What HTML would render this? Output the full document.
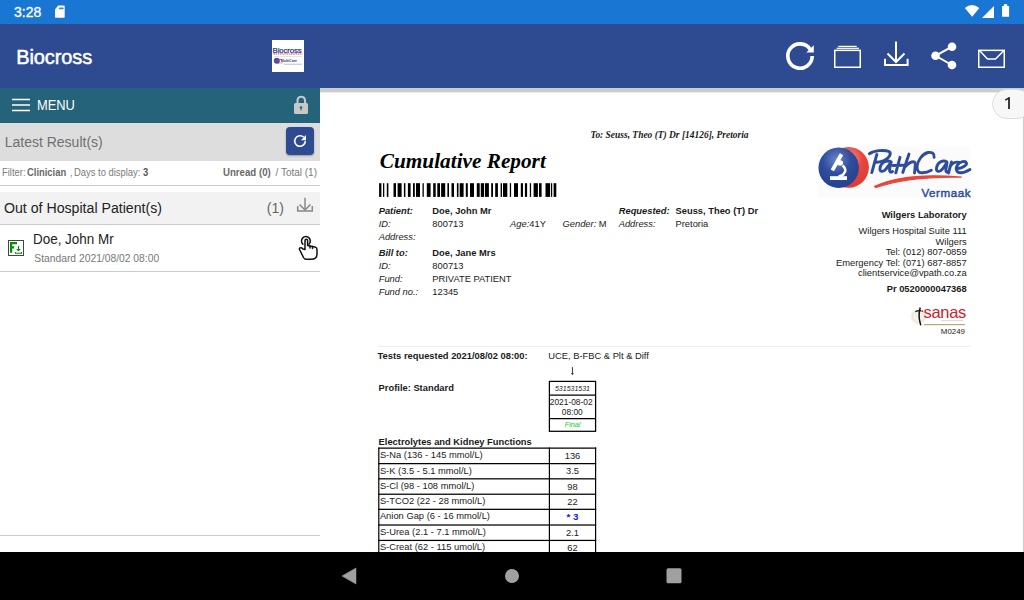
<!DOCTYPE html>
<html><head><meta charset="utf-8"><style>
html,body{margin:0;padding:0;width:1024px;height:600px;overflow:hidden;background:#fff;position:relative;}
</style></head><body>
<div style="position:absolute;left:0px;top:0px;width:1024px;height:24px;background:#1976D2;"></div>
<div style="position:absolute;left:14px;top:5.01px;font-family:'Liberation Sans', sans-serif;font-size:14px;line-height:14px;color:#fff;font-weight:normal;font-style:normal;white-space:pre;-webkit-text-stroke:0.3px #fff;">3:28</div>
<svg style="position:absolute;left:0;top:0" width="1024" height="24"><path d="M58.3 5.4 H64 Q64.7 5.4 64.7 6.1 V17 Q64.7 17.7 64 17.7 H55.7 Q55 17.7 55 17 V9.3 Z" fill="#fff"/><rect x="58.8" y="7.4" width="4.9" height="1.8" rx="0.8" fill="#3a8ae0"/><path d="M964.8 8 Q972 2 979.3 8 L972.2 16.8 Z" fill="#fff"/><path d="M982 17.9 L994 5.9 L994 17.9 Z" fill="#fff"/><rect x="1002" y="6" width="7.1" height="10.8" rx="0.6" fill="#fff"/><rect x="1003.9" y="4.2" width="3.3" height="2" fill="#fff"/></svg>
<div style="position:absolute;left:0px;top:24px;width:1024px;height:64px;background:#2E4A91;"></div>
<div style="position:absolute;left:16.2px;top:47.20px;font-family:'Liberation Sans', sans-serif;font-size:20px;line-height:20px;color:#fff;font-weight:normal;font-style:normal;white-space:pre;-webkit-text-stroke:0.5px #fff;letter-spacing:-0.1px;">Biocross</div>
<div style="position:absolute;left:272px;top:40px;width:32px;height:32px;background:#fff;"></div>
<div style="position:absolute;left:272.6px;top:46.71px;font-family:'Liberation Sans', sans-serif;font-size:7.9px;line-height:7.9px;color:#2A3C8C;font-weight:normal;font-style:normal;white-space:pre;letter-spacing:-0.15px;-webkit-text-stroke:0.25px #2A3C8C;">Biocross</div>
<svg style="position:absolute;left:272px;top:40px" width="32" height="32"><path d="M1.5 14 H30.5" stroke="#E03030" stroke-width="0.9" stroke-dasharray="1.4 0.8"/><rect x="1.5" y="16.3" width="29" height="0.4" fill="#b8bcd0"/><circle cx="4.8" cy="20.8" r="3" fill="#3555A8"/><path d="M2 22.5 Q5 19 9.5 19.5" stroke="#E33" stroke-width="0.9" fill="none"/><text x="8.7" y="22" font-family="Liberation Sans" font-size="3.6" font-weight="bold" fill="#2A3C8C">MultiCare</text><path d="M6 23.5 Q8 22.5 11 23" stroke="#E33" stroke-width="0.5" fill="none"/><rect x="12" y="23.9" width="18" height="0.35" fill="#3a4a98"/></svg>
<svg style="position:absolute;left:0;top:0" width="1024" height="88"><path d="M812.2 56 A12.2 12.2 0 1 1 810.3 49.5" stroke="#fff" stroke-width="3.6" fill="none"/><path d="M806.3 52.4 L813.8 52.4 L813.8 45.2 Z" fill="#fff"/><rect x="834.75" y="50.35" width="25.5" height="16.9" stroke="#fff" stroke-width="1.5" fill="none"/><path d="M836.6 48.3 H859" stroke="#fff" stroke-width="1.2"/><path d="M838.3 46.4 H856.7" stroke="#fff" stroke-width="1.2"/><path d="M896 41.6 V62.5" stroke="#fff" stroke-width="2"/><path d="M887.5 53.5 L896 62 L904.5 53.5" stroke="#fff" stroke-width="2" fill="none"/><path d="M885 58.7 V65 H907.6 V58.7" stroke="#fff" stroke-width="2" fill="none"/><path d="M952 46.7 L935.5 55.8 L952 65" stroke="#fff" stroke-width="2" fill="none"/><circle cx="952" cy="46.7" r="4.3" fill="#fff"/><circle cx="935.5" cy="55.8" r="4.3" fill="#fff"/><circle cx="952" cy="65" r="4.3" fill="#fff"/><rect x="978.75" y="50.35" width="25.5" height="16.9" stroke="#fff" stroke-width="1.5" fill="none"/><path d="M979.5 50.5 L987.5 59 H995.5 L1004 50.5" stroke="#fff" stroke-width="1.5" fill="none"/></svg>
<div style="position:absolute;left:0px;top:88px;width:320px;height:464px;background:#fff;"></div>
<div style="position:absolute;left:0px;top:88px;width:320px;height:35px;background:#246379;"></div>
<svg style="position:absolute;left:0;top:88px" width="320" height="35"><path d="M12 11.4 H30 M12 17 H30 M12 22.6 H30" stroke="#fff" stroke-width="1.5"/><path d="M297.5 15 V12 A3.8 3.8 0 0 1 305 12 V15" stroke="#c8c8c8" stroke-width="2" fill="none"/><rect x="294" y="15" width="14" height="11" rx="1.5" fill="#c8c8c8"/><circle cx="301" cy="19.5" r="1.3" fill="#246379"/><rect x="300.5" y="19.5" width="1" height="3" fill="#246379"/></svg>
<div style="position:absolute;left:36.7px;top:98.01px;font-family:'Liberation Sans', sans-serif;font-size:14px;line-height:14px;color:#fff;font-weight:normal;font-style:normal;white-space:pre;transform-origin:0 0;transform:scaleX(0.92);">MENU</div>
<div style="position:absolute;left:0px;top:123px;width:320px;height:38px;background:#DDDDDD;"></div>
<div style="position:absolute;left:4.7px;top:135.01px;font-family:'Liberation Sans', sans-serif;font-size:14px;line-height:14px;color:#707070;font-weight:normal;font-style:normal;white-space:pre;">Latest Result(s)</div>
<div style="position:absolute;left:286px;top:127px;width:28px;height:28px;background:#2E4A91;border-radius:4px;box-shadow:0 1px 2px rgba(0,0,0,0.3);"></div>
<svg style="position:absolute;left:0;top:0" width="320" height="160"><path d="M305.3 141 A5.3 5.3 0 1 1 303.8 137.3" stroke="#fff" stroke-width="1.6" fill="none"/><path d="M301 140.2 L306 140.2 L306 135 Z" fill="#fff"/></svg>
<div style="position:absolute;left:1.8px;top:167.72px;font-family:'Liberation Sans', sans-serif;font-size:10px;line-height:10px;color:#7a7a7a;font-weight:normal;font-style:normal;white-space:pre;transform-origin:0 0;transform:scaleX(0.94);">Filter:</div>
<div style="position:absolute;left:27.1px;top:167.72px;font-family:'Liberation Sans', sans-serif;font-size:10px;line-height:10px;color:#6a6a6a;font-weight:bold;font-style:normal;white-space:pre;transform-origin:0 0;transform:scaleX(0.94);">Clinician</div>
<div style="position:absolute;left:69.5px;top:167.72px;font-family:'Liberation Sans', sans-serif;font-size:10px;line-height:10px;color:#7a7a7a;font-weight:normal;font-style:normal;white-space:pre;transform-origin:0 0;transform:scaleX(0.94);">,</div>
<div style="position:absolute;left:74.4px;top:167.72px;font-family:'Liberation Sans', sans-serif;font-size:10px;line-height:10px;color:#7a7a7a;font-weight:normal;font-style:normal;white-space:pre;transform-origin:0 0;transform:scaleX(0.94);">Days to display:</div>
<div style="position:absolute;left:142.7px;top:167.72px;font-family:'Liberation Sans', sans-serif;font-size:10px;line-height:10px;color:#555555;font-weight:bold;font-style:normal;white-space:pre;transform-origin:0 0;transform:scaleX(0.94);">3</div>
<div style="position:absolute;left:222.5px;top:167.72px;font-family:'Liberation Sans', sans-serif;font-size:10px;line-height:10px;color:#6a6a6a;font-weight:bold;font-style:normal;white-space:pre;transform-origin:0 0;transform:scaleX(0.965);">Unread (0)</div>
<div style="position:absolute;left:275.5px;top:167.72px;font-family:'Liberation Sans', sans-serif;font-size:10px;line-height:10px;color:#7a7a7a;font-weight:normal;font-style:normal;white-space:pre;transform-origin:0 0;transform:scaleX(1.0);">/ Total (1)</div>
<div style="position:absolute;left:0px;top:185px;width:320px;height:1px;background:#CCCCCC;"></div>
<div style="position:absolute;left:0px;top:192px;width:320px;height:32px;background:#F2F2F2;"></div>
<div style="position:absolute;left:4.4px;top:200.70px;font-family:'Liberation Sans', sans-serif;font-size:14px;line-height:14px;color:#222222;font-weight:normal;font-style:normal;white-space:pre;transform-origin:0 0;transform:scaleX(1.01);">Out of Hospital Patient(s)</div>
<div style="position:absolute;left:266.8px;top:201.01px;font-family:'Liberation Sans', sans-serif;font-size:14px;line-height:14px;color:#666666;font-weight:normal;font-style:normal;white-space:pre;">(1)</div>
<svg style="position:absolute;left:0;top:0" width="320" height="280"><path d="M305 197.7 V210" stroke="#888" stroke-width="1.5"/><path d="M299.5 204.5 L305 210 L310.5 204.5" stroke="#888" stroke-width="1.5" fill="none"/><path d="M297.7 206 V211 H312.3 V206" stroke="#888" stroke-width="1.5" fill="none"/></svg>
<div style="position:absolute;left:0px;top:224px;width:320px;height:1px;background:#CCCCCC;"></div>
<div style="position:absolute;left:32.9px;top:232.01px;font-family:'Liberation Sans', sans-serif;font-size:14px;line-height:14px;color:#222222;font-weight:normal;font-style:normal;white-space:pre;transform-origin:0 0;transform:scaleX(0.96);">Doe, John Mr</div>
<div style="position:absolute;left:34.3px;top:253.71px;font-family:'Liberation Sans', sans-serif;font-size:10.3px;line-height:10.3px;color:#777777;font-weight:normal;font-style:normal;white-space:pre;">Standard 2021/08/02 08:00</div>
<svg style="position:absolute;left:0;top:0" width="320" height="280"><rect x="8.5" y="240.5" width="15" height="15" stroke="#444" stroke-width="1" fill="#fff"/><path d="M11.1 252.8 V243.1 H17 M11.1 247.3 H14.2" stroke="#0A8A0A" stroke-width="2.2" fill="none"/><path d="M18.5 246 V250" stroke="#0A8A0A" stroke-width="1.2"/><path d="M16.2 249 H20.8 L18.5 251.5 Z" fill="#0A8A0A"/><path d="M15.5 252 V253.3 H21.5 V252" stroke="#0A8A0A" stroke-width="1.1" fill="none"/><g stroke="#111" stroke-width="1.5" fill="#fff" stroke-linejoin="round" stroke-linecap="round"><path d="M302.8 244.1 A4.4 4.4 0 1 1 309 244.1" fill="none"/><path d="M305 249.5 V240.5 A1.3 1.3 0 0 1 307.6 240.5 V245.5 L315 247 Q317 247.5 317 249.5 V254 Q317 259.3 311 259.3 H306 Q304.5 259.3 303.5 257.5 L299.5 249.5 Q299 248 300.5 247.8 Q302 247.5 303 249 Z"/><path d="M310 246 V248 M312.5 246.5 V248.5"/></g></svg>
<div style="position:absolute;left:0px;top:271px;width:320px;height:1px;background:#CCCCCC;"></div>
<div style="position:absolute;left:0px;top:535px;width:320px;height:1px;background:#CCCCCC;"></div>
<div style="position:absolute;left:320px;top:88px;width:704px;height:464px;background:#FFFFFF;"></div>
<svg style="position:absolute;left:320px;top:88px" width="704" height="6"><rect x="0" y="0" width="704" height="4.4" fill="#CCCCCC"/></svg>
<div style="position:absolute;left:1023px;top:92px;width:1px;height:460px;background:#CCCCCC;"></div>
<div style="position:absolute;left:590.5px;top:131.20px;font-family:'Liberation Serif', serif;font-size:9.45px;line-height:9.45px;color:#1a1a1a;font-weight:bold;font-style:italic;white-space:pre;">To: Seuss, Theo (T) Dr [14126], Pretoria</div>
<div style="position:absolute;left:379.8px;top:151.00px;font-family:'Liberation Serif', serif;font-size:21.27px;line-height:21.27px;color:#000;font-weight:bold;font-style:italic;white-space:pre;">Cumulative Report</div>
<svg style="position:absolute;left:0;top:0" width="1024" height="600"><rect x="379.1" y="183.2" width="2.3" height="13.7" fill="#000"/><rect x="383" y="183.2" width="1.3" height="13.7" fill="#000"/><rect x="386.8" y="183.2" width="1.6" height="13.7" fill="#000"/><rect x="393.5" y="183.2" width="2.5" height="13.7" fill="#000"/><rect x="397.6" y="183.2" width="4" height="13.7" fill="#000"/><rect x="403.9" y="183.2" width="1.5" height="13.7" fill="#000"/><rect x="407.9" y="183.2" width="2.7" height="13.7" fill="#000"/><rect x="413" y="183.2" width="1.8" height="13.7" fill="#000"/><rect x="416" y="183.2" width="4" height="13.7" fill="#000"/><rect x="422.5" y="183.2" width="1.3" height="13.7" fill="#000"/><rect x="426.8" y="183.2" width="3.8" height="13.7" fill="#000"/><rect x="433.2" y="183.2" width="2.5" height="13.7" fill="#000"/><rect x="437.3" y="183.2" width="2.7" height="13.7" fill="#000"/><rect x="441.1" y="183.2" width="4.1" height="13.7" fill="#000"/><rect x="447.4" y="183.2" width="1.6" height="13.7" fill="#000"/><rect x="451.5" y="183.2" width="2.5" height="13.7" fill="#000"/><rect x="456.9" y="183.2" width="1.6" height="13.7" fill="#000"/><rect x="459.7" y="183.2" width="3.9" height="13.7" fill="#000"/><rect x="465.8" y="183.2" width="2" height="13.7" fill="#000"/><rect x="470" y="183.2" width="4" height="13.7" fill="#000"/><rect x="476.8" y="183.2" width="2.9" height="13.7" fill="#000"/><rect x="480.8" y="183.2" width="3.2" height="13.7" fill="#000"/><rect x="484.9" y="183.2" width="4" height="13.7" fill="#000"/><rect x="491.2" y="183.2" width="1.8" height="13.7" fill="#000"/><rect x="495.2" y="183.2" width="2.7" height="13.7" fill="#000"/><rect x="500.6" y="183.2" width="1.4" height="13.7" fill="#000"/><rect x="503" y="183.2" width="4.3" height="13.7" fill="#000"/><rect x="509.8" y="183.2" width="1.3" height="13.7" fill="#000"/><rect x="514" y="183.2" width="4" height="13.7" fill="#000"/><rect x="520.8" y="183.2" width="2.2" height="13.7" fill="#000"/><rect x="524.9" y="183.2" width="2.2" height="13.7" fill="#000"/><rect x="529.8" y="183.2" width="1.3" height="13.7" fill="#000"/><rect x="533.6" y="183.2" width="4.3" height="13.7" fill="#000"/><rect x="539" y="183.2" width="2.6" height="13.7" fill="#000"/><rect x="545.5" y="183.2" width="4.5" height="13.7" fill="#000"/><rect x="550.9" y="183.2" width="1.3" height="13.7" fill="#000"/><rect x="553.6" y="183.2" width="2.7" height="13.7" fill="#000"/></svg>
<div style="position:absolute;left:378.7px;top:206.70px;font-family:'Liberation Sans', sans-serif;font-size:9.35px;line-height:9.35px;color:#1a1a1a;font-weight:bold;font-style:italic;white-space:pre;">Patient:</div>
<div style="position:absolute;left:432.3px;top:206.70px;font-family:'Liberation Sans', sans-serif;font-size:9.35px;line-height:9.35px;color:#1a1a1a;font-weight:bold;font-style:normal;white-space:pre;">Doe, John Mr</div>
<div style="position:absolute;left:378.7px;top:219.70px;font-family:'Liberation Sans', sans-serif;font-size:9.35px;line-height:9.35px;color:#1a1a1a;font-weight:normal;font-style:italic;white-space:pre;">ID:</div>
<div style="position:absolute;left:432.3px;top:219.70px;font-family:'Liberation Sans', sans-serif;font-size:9.35px;line-height:9.35px;color:#1a1a1a;font-weight:normal;font-style:normal;white-space:pre;">800713</div>
<div style="position:absolute;left:378.7px;top:232.70px;font-family:'Liberation Sans', sans-serif;font-size:9.35px;line-height:9.35px;color:#1a1a1a;font-weight:normal;font-style:italic;white-space:pre;">Address:</div>
<div style="position:absolute;left:378.7px;top:248.81px;font-family:'Liberation Sans', sans-serif;font-size:9.35px;line-height:9.35px;color:#1a1a1a;font-weight:bold;font-style:italic;white-space:pre;">Bill to:</div>
<div style="position:absolute;left:432.3px;top:248.81px;font-family:'Liberation Sans', sans-serif;font-size:9.35px;line-height:9.35px;color:#1a1a1a;font-weight:bold;font-style:normal;white-space:pre;">Doe, Jane Mrs</div>
<div style="position:absolute;left:378.7px;top:261.81px;font-family:'Liberation Sans', sans-serif;font-size:9.35px;line-height:9.35px;color:#1a1a1a;font-weight:normal;font-style:italic;white-space:pre;">ID:</div>
<div style="position:absolute;left:432.3px;top:261.81px;font-family:'Liberation Sans', sans-serif;font-size:9.35px;line-height:9.35px;color:#1a1a1a;font-weight:normal;font-style:normal;white-space:pre;">800713</div>
<div style="position:absolute;left:378.7px;top:274.70px;font-family:'Liberation Sans', sans-serif;font-size:9.35px;line-height:9.35px;color:#1a1a1a;font-weight:normal;font-style:italic;white-space:pre;">Fund:</div>
<div style="position:absolute;left:432.3px;top:274.70px;font-family:'Liberation Sans', sans-serif;font-size:9.35px;line-height:9.35px;color:#1a1a1a;font-weight:normal;font-style:normal;white-space:pre;">PRIVATE PATIENT</div>
<div style="position:absolute;left:378.7px;top:287.70px;font-family:'Liberation Sans', sans-serif;font-size:9.35px;line-height:9.35px;color:#1a1a1a;font-weight:normal;font-style:italic;white-space:pre;">Fund no.:</div>
<div style="position:absolute;left:432.3px;top:287.70px;font-family:'Liberation Sans', sans-serif;font-size:9.35px;line-height:9.35px;color:#1a1a1a;font-weight:normal;font-style:normal;white-space:pre;">12345</div>
<div style="position:absolute;left:510px;top:219.70px;font-family:'Liberation Sans', sans-serif;font-size:9.35px;line-height:9.35px;color:#1a1a1a;font-weight:normal;font-style:normal;white-space:pre;"><i>Age:</i>41Y</div>
<div style="position:absolute;left:562.5px;top:219.70px;font-family:'Liberation Sans', sans-serif;font-size:9.35px;line-height:9.35px;color:#1a1a1a;font-weight:normal;font-style:normal;white-space:pre;"><i>Gender:</i> M</div>
<div style="position:absolute;left:618.7px;top:206.70px;font-family:'Liberation Sans', sans-serif;font-size:9.35px;line-height:9.35px;color:#1a1a1a;font-weight:bold;font-style:italic;white-space:pre;">Requested:</div>
<div style="position:absolute;left:675.5px;top:206.70px;font-family:'Liberation Sans', sans-serif;font-size:9.35px;line-height:9.35px;color:#1a1a1a;font-weight:bold;font-style:normal;white-space:pre;">Seuss, Theo (T) Dr</div>
<div style="position:absolute;left:618.7px;top:219.70px;font-family:'Liberation Sans', sans-serif;font-size:9.35px;line-height:9.35px;color:#1a1a1a;font-weight:normal;font-style:italic;white-space:pre;">Address:</div>
<div style="position:absolute;left:675.5px;top:219.70px;font-family:'Liberation Sans', sans-serif;font-size:9.35px;line-height:9.35px;color:#1a1a1a;font-weight:normal;font-style:normal;white-space:pre;">Pretoria</div>
<div style="position:absolute;left:818px;top:147px;width:152px;height:50px;background:#FBFBFB;"></div>
<svg style="position:absolute;left:0;top:0" width="1024" height="600"><defs><radialGradient id="gb" cx="0.45" cy="0.3" r="0.7"><stop offset="0" stop-color="#6f86c4"/><stop offset="0.5" stop-color="#2f4c9e"/><stop offset="1" stop-color="#25418f"/></radialGradient><radialGradient id="gr" cx="0.5" cy="0.3" r="0.7"><stop offset="0" stop-color="#f59a90"/><stop offset="0.5" stop-color="#e8453c"/><stop offset="1" stop-color="#e03a32"/></radialGradient></defs><circle cx="848.5" cy="167.3" r="20.4" fill="url(#gr)"/><circle cx="838.7" cy="167.7" r="20.2" fill="url(#gb)"/><path d="M841.5 154.3 L832.3 170.4" stroke="#fff" stroke-width="3.8"/><circle cx="840.2" cy="163" r="2.8" fill="#fff"/><path d="M842.6 165.6 Q847.6 170 843.5 174.2 Q841.5 176 838.5 176.5" stroke="#fff" stroke-width="2.6" fill="none"/><rect x="830" y="176.2" width="17" height="3.8" fill="#fff"/><path d="M874.7 186.4 Q905 172 961.7 177.2 Q910 176 876 187.5 Z" fill="#E8453C" stroke="#E8453C" stroke-width="1.2"/></svg>
<svg style="position:absolute;left:0;top:0" width="1024" height="600"><g stroke="#2E4C9C" stroke-width="2.9" fill="none" stroke-linecap="round" stroke-linejoin="round"><path d="M869.4 153.7 C874 150.5 884 149.5 889 151.5 C892 153.5 889 158.5 884 160.5 C881 161.8 878 162.3 876 162.3"/><path d="M876.8 154.5 L871.8 172.6"/><path d="M891.3 162 C887 159.5 881 162 880 168 C879.5 172 883 172.5 886 169 L891 162.5 L889.5 170 C889.5 172.5 891 172.5 892.5 171.5"/><path d="M900 157.3 L895.8 172.8 M892.8 165.5 L903.3 165.2"/><path d="M909 154 L902.8 172.5 M905 167 C908 163 912.5 161 914.5 162 C916 163 915 167 914.5 173"/><path d="M934.1 157.3 C934.5 153.5 932 151.8 928 152.5 C922 154 917.5 161 917.1 166.5 C916.8 171 919 173 922.5 172.8 C926 172.6 929 171.5 931.3 170.2"/><path d="M947 162 C943 159.5 937.5 162 936.5 168 C936 172 939.5 172.5 942.5 169 L947 162.5 L945.8 170 C945.8 172.5 947 172.5 948.5 171.5"/><path d="M951.5 162 L948.5 173 M949.8 167 C952 163 956 161.5 959 162.3"/><path d="M958 168.5 C962 168 967 165.5 966.5 163 C965.5 160.5 960 161 957.5 165 C955 169 956.5 173 961 172.8 C964 172.7 967.5 171 970 169.5"/></g></svg>
<div style="position:absolute;right:53.0px;top:186.81px;font-family:'Liberation Sans', sans-serif;font-size:11.6px;line-height:11.6px;color:#2E4C9C;font-weight:normal;font-style:normal;white-space:pre;-webkit-text-stroke:0.45px #2E4C9C;letter-spacing:0.55px;transform-origin:100% 0;transform:scaleY(0.98);">Vermaak</div>
<div style="position:absolute;right:57.299999999999955px;top:211.01px;font-family:'Liberation Sans', sans-serif;font-size:9.35px;line-height:9.35px;color:#1a1a1a;font-weight:bold;font-style:normal;white-space:pre;">Wilgers Laboratory</div>
<div style="position:absolute;right:57.299999999999955px;top:227.01px;font-family:'Liberation Sans', sans-serif;font-size:9.35px;line-height:9.35px;color:#1a1a1a;font-weight:normal;font-style:normal;white-space:pre;">Wilgers Hospital Suite 111</div>
<div style="position:absolute;right:57.299999999999955px;top:237.51px;font-family:'Liberation Sans', sans-serif;font-size:9.35px;line-height:9.35px;color:#1a1a1a;font-weight:normal;font-style:normal;white-space:pre;">Wilgers</div>
<div style="position:absolute;right:57.299999999999955px;top:248.01px;font-family:'Liberation Sans', sans-serif;font-size:9.35px;line-height:9.35px;color:#1a1a1a;font-weight:normal;font-style:normal;white-space:pre;">Tel: (012) 807-0859</div>
<div style="position:absolute;right:57.299999999999955px;top:258.70px;font-family:'Liberation Sans', sans-serif;font-size:9.35px;line-height:9.35px;color:#1a1a1a;font-weight:normal;font-style:normal;white-space:pre;">Emergency Tel: (071) 687-8857</div>
<div style="position:absolute;right:57.299999999999955px;top:268.51px;font-family:'Liberation Sans', sans-serif;font-size:9.35px;line-height:9.35px;color:#1a1a1a;font-weight:normal;font-style:normal;white-space:pre;">clientservice@vpath.co.za</div>
<div style="position:absolute;right:57.299999999999955px;top:284.81px;font-family:'Liberation Sans', sans-serif;font-size:9.35px;line-height:9.35px;color:#1a1a1a;font-weight:bold;font-style:normal;white-space:pre;">Pr 0520000047368</div>
<svg style="position:absolute;left:0;top:0" width="1024" height="600"><circle cx="918.5" cy="316.5" r="8" fill="#EDE8D8" opacity="0.55"/><circle cx="918.5" cy="316.5" r="6" fill="none" stroke="#D8D0B0" stroke-width="0.6" opacity="0.8"/><path d="M920.2 307.5 Q918.5 314 919.2 318 Q919.8 322 920.8 325.4" stroke="#111" stroke-width="1.5" fill="none"/><path d="M915.4 311.6 Q918 310.3 921 310.6" stroke="#111" stroke-width="1.2" fill="none"/><circle cx="922.3" cy="311.2" r="0.9" fill="#c22"/><rect x="924" y="324" width="41" height="1.2" fill="#b8a878"/><rect x="941" y="320.5" width="22" height="0.6" fill="#bbb"/></svg>
<div style="position:absolute;left:923.5px;top:303.52px;font-family:'Liberation Sans', sans-serif;font-size:16.5px;line-height:16.5px;color:#D0202A;font-weight:normal;font-style:normal;white-space:pre;letter-spacing:-0.3px;">sanas</div>
<div style="position:absolute;right:59px;top:327.77px;font-family:'Liberation Sans', sans-serif;font-size:7.9px;line-height:7.9px;color:#222;font-weight:normal;font-style:normal;white-space:pre;">M0249</div>
<div style="position:absolute;left:378px;top:346px;width:592px;height:1px;background:#EEEEEE;"></div>
<div style="position:absolute;left:377.6px;top:352.40px;font-family:'Liberation Sans', sans-serif;font-size:9.35px;line-height:9.35px;color:#1a1a1a;font-weight:bold;font-style:normal;white-space:pre;">Tests requested 2021/08/02 08:00:</div>
<div style="position:absolute;left:548.25px;top:352.01px;font-family:'Liberation Sans', sans-serif;font-size:9.35px;line-height:9.35px;color:#1a1a1a;font-weight:normal;font-style:normal;white-space:pre;">UCE, B-FBC &amp; Plt &amp; Diff</div>
<div style="position:absolute;left:378.6px;top:384.01px;font-family:'Liberation Sans', sans-serif;font-size:9.35px;line-height:9.35px;color:#1a1a1a;font-weight:bold;font-style:normal;white-space:pre;">Profile: Standard</div>
<div style="position:absolute;left:272.5px;width:600px;text-align:center;top:384.76px;font-family:'Liberation Sans', sans-serif;font-size:7px;line-height:7px;color:#1a1a1a;font-weight:normal;font-style:italic;white-space:pre;">531531531</div>
<div style="position:absolute;left:271.20000000000005px;width:600px;text-align:center;top:398.02px;font-family:'Liberation Sans', sans-serif;font-size:8.36px;line-height:8.36px;color:#1a1a1a;font-weight:normal;font-style:normal;white-space:pre;">2021-08-02</div>
<div style="position:absolute;left:272.29999999999995px;width:600px;text-align:center;top:407.77px;font-family:'Liberation Sans', sans-serif;font-size:8.36px;line-height:8.36px;color:#1a1a1a;font-weight:normal;font-style:normal;white-space:pre;">08:00</div>
<div style="position:absolute;left:272.6px;width:600px;text-align:center;top:421.22px;font-family:'Liberation Sans', sans-serif;font-size:7.25px;line-height:7.25px;color:#22C922;font-weight:normal;font-style:italic;white-space:pre;">Final</div>
<div style="position:absolute;left:378.6px;top:437.70px;font-family:'Liberation Sans', sans-serif;font-size:9.35px;line-height:9.35px;color:#1a1a1a;font-weight:bold;font-style:normal;white-space:pre;">Electrolytes and Kidney Functions</div>
<svg style="position:absolute;left:0;top:0" width="1024" height="600"><rect x="378.2" y="447.5" width="218" height="1.25" fill="#000"/><rect x="378.2" y="463.0" width="218" height="1.25" fill="#000"/><rect x="378.2" y="478.2" width="218" height="1.25" fill="#000"/><rect x="378.2" y="493.59999999999997" width="218" height="1.25" fill="#000"/><rect x="378.2" y="508.7" width="218" height="1.25" fill="#000"/><rect x="378.2" y="524.4" width="218" height="1.25" fill="#000"/><rect x="378.2" y="539.8" width="218" height="1.25" fill="#000"/><rect x="378.2" y="555.1" width="218" height="1.25" fill="#000"/><rect x="378.2" y="447.5" width="1.2" height="110" fill="#000"/><rect x="548.8" y="447.5" width="1.2" height="110" fill="#000"/><rect x="595.0" y="447.5" width="1.2" height="110" fill="#000"/><rect x="549.4" y="381.4" width="46.2" height="49.9" fill="none" stroke="#000" stroke-width="1.25"/><rect x="549" y="394.5" width="47" height="1.25" fill="#000"/><rect x="549" y="418" width="47" height="1.25" fill="#000"/><path d="M572.45 367.1 V373.5" stroke="#333" stroke-width="1"/><path d="M570.8 373.2 H574.1 L572.45 374.9 Z" fill="#222"/></svg>
<div style="position:absolute;left:379.9px;top:451.10px;font-family:'Liberation Sans', sans-serif;font-size:9.35px;line-height:9.35px;color:#1a1a1a;font-weight:normal;font-style:normal;white-space:pre;">S-Na (136 - 145 mmol/L)</div>
<div style="position:absolute;left:272.5px;width:600px;text-align:center;top:451.81px;font-family:'Liberation Sans', sans-serif;font-size:9.35px;line-height:9.35px;color:#1a1a1a;font-weight:normal;font-style:normal;white-space:pre;">136</div>
<div style="position:absolute;left:379.9px;top:466.60px;font-family:'Liberation Sans', sans-serif;font-size:9.35px;line-height:9.35px;color:#1a1a1a;font-weight:normal;font-style:normal;white-space:pre;">S-K (3.5 - 5.1 mmol/L)</div>
<div style="position:absolute;left:272.5px;width:600px;text-align:center;top:467.31px;font-family:'Liberation Sans', sans-serif;font-size:9.35px;line-height:9.35px;color:#1a1a1a;font-weight:normal;font-style:normal;white-space:pre;">3.5</div>
<div style="position:absolute;left:379.9px;top:481.81px;font-family:'Liberation Sans', sans-serif;font-size:9.35px;line-height:9.35px;color:#1a1a1a;font-weight:normal;font-style:normal;white-space:pre;">S-Cl (98 - 108 mmol/L)</div>
<div style="position:absolute;left:272.5px;width:600px;text-align:center;top:482.51px;font-family:'Liberation Sans', sans-serif;font-size:9.35px;line-height:9.35px;color:#1a1a1a;font-weight:normal;font-style:normal;white-space:pre;">98</div>
<div style="position:absolute;left:379.9px;top:497.20px;font-family:'Liberation Sans', sans-serif;font-size:9.35px;line-height:9.35px;color:#1a1a1a;font-weight:normal;font-style:normal;white-space:pre;">S-TCO2 (22 - 28 mmol/L)</div>
<div style="position:absolute;left:272.5px;width:600px;text-align:center;top:497.90px;font-family:'Liberation Sans', sans-serif;font-size:9.35px;line-height:9.35px;color:#1a1a1a;font-weight:normal;font-style:normal;white-space:pre;">22</div>
<div style="position:absolute;left:379.9px;top:512.31px;font-family:'Liberation Sans', sans-serif;font-size:9.35px;line-height:9.35px;color:#1a1a1a;font-weight:normal;font-style:normal;white-space:pre;">Anion Gap (6 - 16 mmol/L)</div>
<div style="position:absolute;left:272.5px;width:600px;text-align:center;top:512.01px;font-family:'Liberation Sans', sans-serif;font-size:9.35px;line-height:9.35px;color:#1a1a1a;font-weight:normal;font-style:normal;white-space:pre;"><b style="color:#1515F0;font-size:9.8px">* 3</b></div>
<div style="position:absolute;left:379.9px;top:528.01px;font-family:'Liberation Sans', sans-serif;font-size:9.35px;line-height:9.35px;color:#1a1a1a;font-weight:normal;font-style:normal;white-space:pre;">S-Urea (2.1 - 7.1 mmol/L)</div>
<div style="position:absolute;left:272.5px;width:600px;text-align:center;top:528.70px;font-family:'Liberation Sans', sans-serif;font-size:9.35px;line-height:9.35px;color:#1a1a1a;font-weight:normal;font-style:normal;white-space:pre;">2.1</div>
<div style="position:absolute;left:379.9px;top:543.40px;font-family:'Liberation Sans', sans-serif;font-size:9.35px;line-height:9.35px;color:#1a1a1a;font-weight:normal;font-style:normal;white-space:pre;">S-Creat (62 - 115 umol/L)</div>
<div style="position:absolute;left:272.5px;width:600px;text-align:center;top:544.10px;font-family:'Liberation Sans', sans-serif;font-size:9.35px;line-height:9.35px;color:#1a1a1a;font-weight:normal;font-style:normal;white-space:pre;">62</div>
<div style="position:absolute;left:992px;top:89px;width:40px;height:30px;background:#F7F7F7;border:1px solid #DDDDDD;border-radius:15px;box-sizing:border-box;"></div>
<svg style="position:absolute;left:0;top:0" width="1024" height="130"><path d="M1009 97.5 V108.9" stroke="#222" stroke-width="1.8"/><path d="M1005.2 100.1 L1009.6 97.6" stroke="#222" stroke-width="1.6"/></svg>
<div style="position:absolute;left:0px;top:552px;width:1024px;height:48px;background:#000;"></div>
<svg style="position:absolute;left:0;top:552px" width="1024" height="48"><path d="M342 24 L356 16 L356 32 Z" fill="#A0A0A0" stroke="#A0A0A0" stroke-width="0.5" stroke-linejoin="round"/><circle cx="512" cy="24" r="7" fill="#A0A0A0"/><rect x="666.5" y="16.2" width="15" height="15" rx="1.5" fill="#A0A0A0"/></svg>
</body></html>
